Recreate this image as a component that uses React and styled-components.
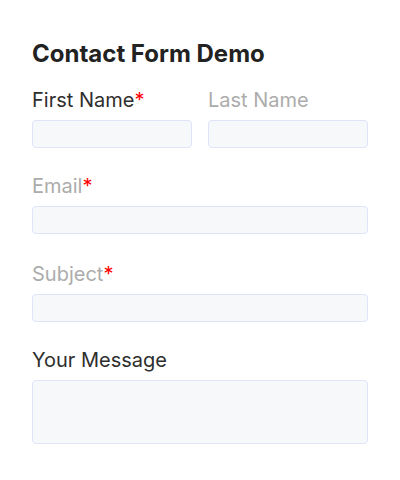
import React from 'react';
import styled, { createGlobalStyle } from 'styled-components';

const GlobalStyle = createGlobalStyle`
  body {
    margin: 0;
    background: #ffffff;
    font-family: Inter, "Liberation Sans", sans-serif;
  }
`;

const Wrapper = styled.div`
  width: 400px;
  box-sizing: border-box;
  padding: 39px 32px 0;
`;

const Title = styled.h2`
  margin: 0 0 20px;
  font-size: 24px;
  font-weight: 700;
  color: #222222;
  line-height: 29px;
`;

const Row = styled.div`
  display: flex;
  gap: 16px;
  margin-bottom: ${(p) => p.gap}px;
`;

const Field = styled.div`
  flex: 1;
  display: flex;
  flex-direction: column;
`;

const Label = styled.label`
  font-size: 20px;
  line-height: 24px;
  margin-bottom: 8px;
  color: ${(p) => (p.muted ? '#acacac' : '#2e2e2e')};
`;

const Star = styled.span`
  color: #ff0000;
`;

const Input = styled.div`
  box-sizing: border-box;
  height: ${(p) => p.height || 28}px;
  background: #f7f8fa;
  border: 1px solid #dfe4fb;
  border-radius: 4px;
`;

const fields = [
  [
    { label: 'First Name', required: true },
    { label: 'Last Name', muted: true },
  ],
  [{ label: 'Email', required: true, muted: true }],
  [{ label: 'Subject', required: true, muted: true }],
  [{ label: 'Your Message', height: 64 }],
];

const gaps = [26, 28, 26, 0];

const App = () => (
  <Wrapper>
    <GlobalStyle />
    <Title>Contact Form Demo</Title>
    {fields.map((row, i) => (
      <Row key={i} gap={gaps[i]}>
        {row.map((f) => (
          <Field key={f.label}>
            <Label muted={f.muted}>
              {f.label}
              {f.required && <Star>*</Star>}
            </Label>
            <Input height={f.height} />
          </Field>
        ))}
      </Row>
    ))}
  </Wrapper>
);

export default App;
